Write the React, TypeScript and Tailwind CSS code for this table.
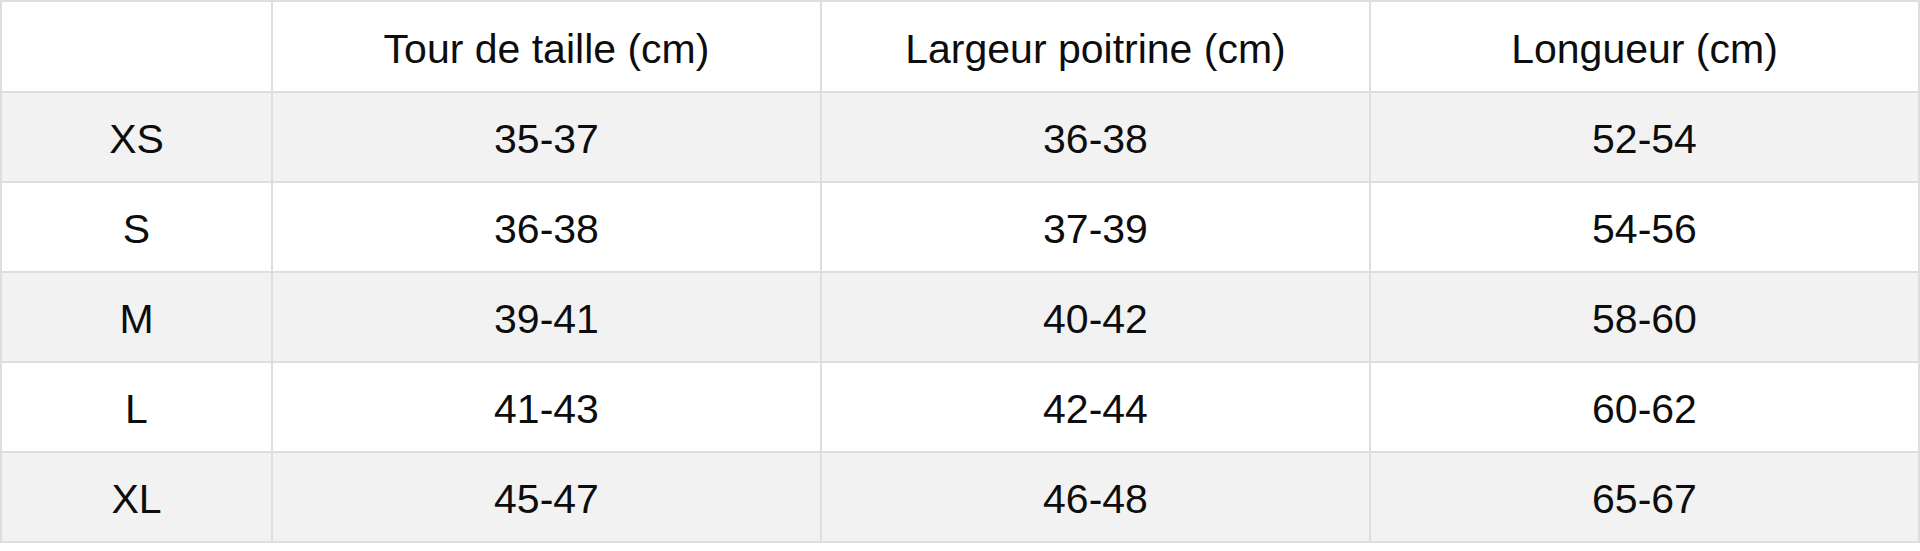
const columns = ["Tour de taille (cm)", "Largeur poitrine (cm)", "Longueur (cm)"];

const rows = [
  { size: "XS", values: ["35-37", "36-38", "52-54"] },
  { size: "S", values: ["36-38", "37-39", "54-56"] },
  { size: "M", values: ["39-41", "40-42", "58-60"] },
  { size: "L", values: ["41-43", "42-44", "60-62"] },
  { size: "XL", values: ["45-47", "46-48", "65-67"] },
];

export default function App() {
  return (
    <div className="w-[1920px] h-[551px] bg-white" style={{ fontFamily: '"Liberation Sans", Arial, sans-serif' }}>
      <table className="w-full border-collapse table-fixed text-[41px] text-[#0d0d0d]">
        <colgroup>
          <col className="w-[271px]" />
          <col />
          <col />
          <col />
        </colgroup>
        <thead>
          <tr className="h-[91px] bg-white">
            <th className="border-2 border-[#dedede] font-normal pt-1.5"></th>
            {columns.map((col) => (
              <th key={col} className="border-2 border-[#dedede] font-normal text-center align-middle pt-1.5">
                {col}
              </th>
            ))}
          </tr>
        </thead>
        <tbody>
          {rows.map((row, index) => (
            <tr key={row.size} className={`h-[90px] ${index % 2 === 0 ? "bg-[#f2f2f2]" : "bg-white"}`}>
              <td className="border-2 border-[#dedede] text-center align-middle pt-1.5">{row.size}</td>
              {row.values.map((value, idx) => (
                <td key={idx} className="border-2 border-[#dedede] text-center align-middle pt-1.5">
                  {value}
                </td>
              ))}
            </tr>
          ))}
        </tbody>
      </table>
    </div>
  );
}
